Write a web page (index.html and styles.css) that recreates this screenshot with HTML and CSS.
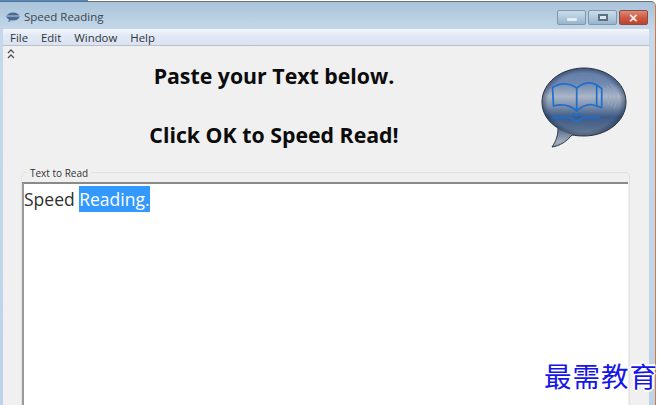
FILE: index.html
```html
<!DOCTYPE html>
<html lang="en">
<head>
<meta charset="utf-8">
<title>Speed Reading</title>
<link rel="stylesheet" href="styles.css">
</head>
<body>
<div class="accent"></div>
<div class="window">
  <div class="titlebar">
    <svg class="appicon" width="14" height="10" viewBox="0 0 14 10"><ellipse cx="7" cy="4.5" rx="6.5" ry="4" fill="#4a6a94"/><path d="M1 4h12" stroke="#b9cde0" stroke-width="1"/><path d="M3 8l-1 2 3-1z" fill="#4a6a94"/></svg>
    <span class="title">Speed Reading</span>
    <div class="controls">
      <div class="ctl"><span class="min"></span></div>
      <div class="ctl"><span class="max"></span></div>
      <div class="ctl close"><span class="x">×</span></div>
    </div>
  </div>
  <div class="client">
    <div class="menubar">
      <span>File</span><span>Edit</span><span>Window</span><span>Help</span>
    </div>
    <div class="content">
      <div class="chev">
        <svg width="8" height="10" viewBox="0 0 8 10" fill="none" stroke="#555" stroke-width="1.3"><path d="M1 4l3-3 3 3M1 9l3-3 3 3"/></svg>
      </div>
      <div class="header">
        <div class="headings">
          <h1>Paste your Text below.</h1>
          <h1>Click OK to Speed Read!</h1>
        </div>
        <svg class="logo" width="88" height="84" viewBox="0 0 88 84">
          <defs>
            <linearGradient id="bub" x1="0" y1="0" x2="0" y2="1">
              <stop offset="0" stop-color="#5f7aa6"/>
              <stop offset="0.2" stop-color="#7089b0"/>
              <stop offset="0.36" stop-color="#aab5c8"/>
              <stop offset="0.48" stop-color="#7f91ad"/>
              <stop offset="0.62" stop-color="#3d5b88"/>
              <stop offset="0.78" stop-color="#5a6f8e"/>
              <stop offset="0.93" stop-color="#a3adba"/>
              <stop offset="1" stop-color="#8d97a6"/>
            </linearGradient>
            <radialGradient id="rim" cx="50%" cy="50%" r="50%">
              <stop offset="0.85" stop-color="#1f2c44" stop-opacity="0"/>
              <stop offset="1" stop-color="#1f2c44" stop-opacity="0.5"/>
            </radialGradient>
          </defs>
          <path d="M44 2C67 2 86 17 86 36C86 56 66 70 44 70C39 70 35 69.500 32 69C27 75 20 80 12 81C16 75 18 70 18 62C8 56 2 47 2 36C2 17 21 2 44 2Z" fill="url(#bub)" stroke="#2a3648" stroke-width="1"/>
          <ellipse cx="44" cy="36" rx="42" ry="34" fill="url(#rim)"/>
          <g fill="none" stroke="#1f6fcc" stroke-width="1.700">
            <path d="M12.500 21.500C20 16 30 17 36.700 22C43 17 50 15 56.700 19V40C50 37 43 39 36.700 45C30 39 21 38 13.500 40Z"/>
            <path d="M36.700 22V45"/>
            <path d="M56.700 19L61.700 22.500V41.500L56.700 40"/>
            <path d="M11.700 51.500H30L36.700 55.500L43 51.500H60" stroke-width="2"/>
            <path d="M33 47L36.700 50L40 47"/>
          </g>
          <g fill="none" stroke="#9aa9bd" stroke-width="1" opacity="0.8">
            <path d="M64 22C69 26 70 33 68 38"/>
            <path d="M67 20C73 25 74 35 71 40"/>
            <path d="M70 18C77 25 78 36 74 42"/>
          </g>
        </svg>
      </div>
      <div class="group">
        <span class="legend">Text to Read</span>
        <div class="textbox">Speed <span class="sel">Reading.</span></div>
      </div>
    </div>
  </div>
</div>
<div class="watermark">最需教育</div>
</body>
</html>
```

FILE: styles.css
```css
* { box-sizing: border-box; }
html, body { margin: 0; height: 100%; }
body {
  width: 666px;
  height: 405px;
  overflow: hidden;
  background: #fff;
  position: relative;
  font-family: "Open Sans", "Noto Sans", sans-serif;
}
.accent {
  position: absolute;
  left: 0;
  top: 0;
  width: 88px;
  height: 1px;
  background: #3d8fd8;
}
.window {
  width: 656px;
  height: 405px;
  margin-top: 1px;
  display: flex;
  flex-direction: column;
  padding: 0 6px 0 3px;
  border-top: 1px solid #6b7076;
  border-right: 1px solid #d9773f;
  border-top-right-radius: 5px;
  background: linear-gradient(#a9c3da 0, #c6d9ea 30px, #bcd3e8 100%);
}
.titlebar {
  height: 27px;
  display: flex;
  align-items: center;
  gap: 4px;
  padding: 2px 0 0 3px;
  flex: none;
}
.appicon { flex: none; }
.title {
  font-size: 11.500px;
  color: #3a4650;
}
.controls {
  margin-left: auto;
  display: flex;
  gap: 2px;
  margin-top: 2px;
  margin-right: 1px;
}
.ctl {
  width: 29px;
  height: 15px;
  border: 1px solid #7d97ad;
  border-radius: 2px;
  background: linear-gradient(#cbdcea 0, #b3cadd 50%, #98b5cc 100%);
  display: flex;
  align-items: center;
  justify-content: center;
}
.ctl.close {
  border-color: #8f4a44;
  background: linear-gradient(#dd8a78 0, #cf5a44 50%, #b9452f 100%);
}
.min { width: 10px; height: 3px; background: #e6edf3; border-radius: 1px; margin-top: 3px; }
.max { width: 10px; height: 7px; border: 2px solid #5e7184; background: #dbe6ee; }
.x { color: #f4ece8; font: bold 15px/13px "Liberation Sans", sans-serif; }
.client {
  flex: 1;
  display: flex;
  flex-direction: column;
  background: #f0f0f0;
  min-height: 0;
}
.menubar {
  height: 17px;
  flex: none;
  display: flex;
  align-items: center;
  gap: 13px;
  padding-left: 7px;
  font-size: 11.400px;
  color: #30353a;
  background: linear-gradient(#f2f6fb 0, #e1e8f5 45%, #dbe3f2 100%);
  border-bottom: 1px solid #b9c0c8;
}
.content {
  flex: 1;
  min-height: 0;
  display: flex;
  flex-direction: column;
}
.chev { height: 15px; padding: 3px 0 0 4px; line-height: 0; flex: none; }
.header {
  flex: none;
  height: 111px;
  display: flex;
  align-items: flex-start;
}
.headings {
  width: 542px;
  display: flex;
  flex-direction: column;
  align-items: center;
  gap: 29px;
}
h1 {
  margin: 0;
  font-size: 21.300px;
  line-height: 30px;
  font-weight: 700;
  color: #0c0c0c;
}
.logo { margin-top: 5px; margin-left: -5px; flex: none; }
.group {
  flex: 1;
  min-height: 0;
  margin: 0 0 0 18px;
  width: 609px;
  border: 1px solid #e2e2e2;
  border-radius: 5px 5px 0 0;
  border-bottom: 0;
  position: relative;
  padding: 9px 1px 0 0;
}
.legend {
  position: absolute;
  left: 5px;
  top: -6px;
  padding: 0 3px;
  background: #f0f0f0;
  font-size: 10px;
  line-height: 13px;
  color: #333;
}
.textbox {
  height: 100%;
  background: #fff;
  border-top: 2px solid #8a8a8a;
  border-left: 2px solid #9a9a9a;
  padding-top: 2px;
  font-size: 17.500px;
  line-height: 26px;
  color: #303030;
}
.sel { background: #3399ff; color: #fff; display: inline-block; }
.watermark {
  position: absolute;
  right: 8px;
  bottom: 15px;
  font-family: "Noto Sans CJK SC", sans-serif;
  font-size: 27.500px;
  line-height: 30px;
  letter-spacing: 1px;
  color: #1515e8;
  text-shadow: 1px 0 #fff, -1px 0 #fff, 0 1px #fff, 0 -1px #fff, 2px 0 #fff, -2px 0 #fff, 0 2px #fff, 0 -2px #fff;
}
```
